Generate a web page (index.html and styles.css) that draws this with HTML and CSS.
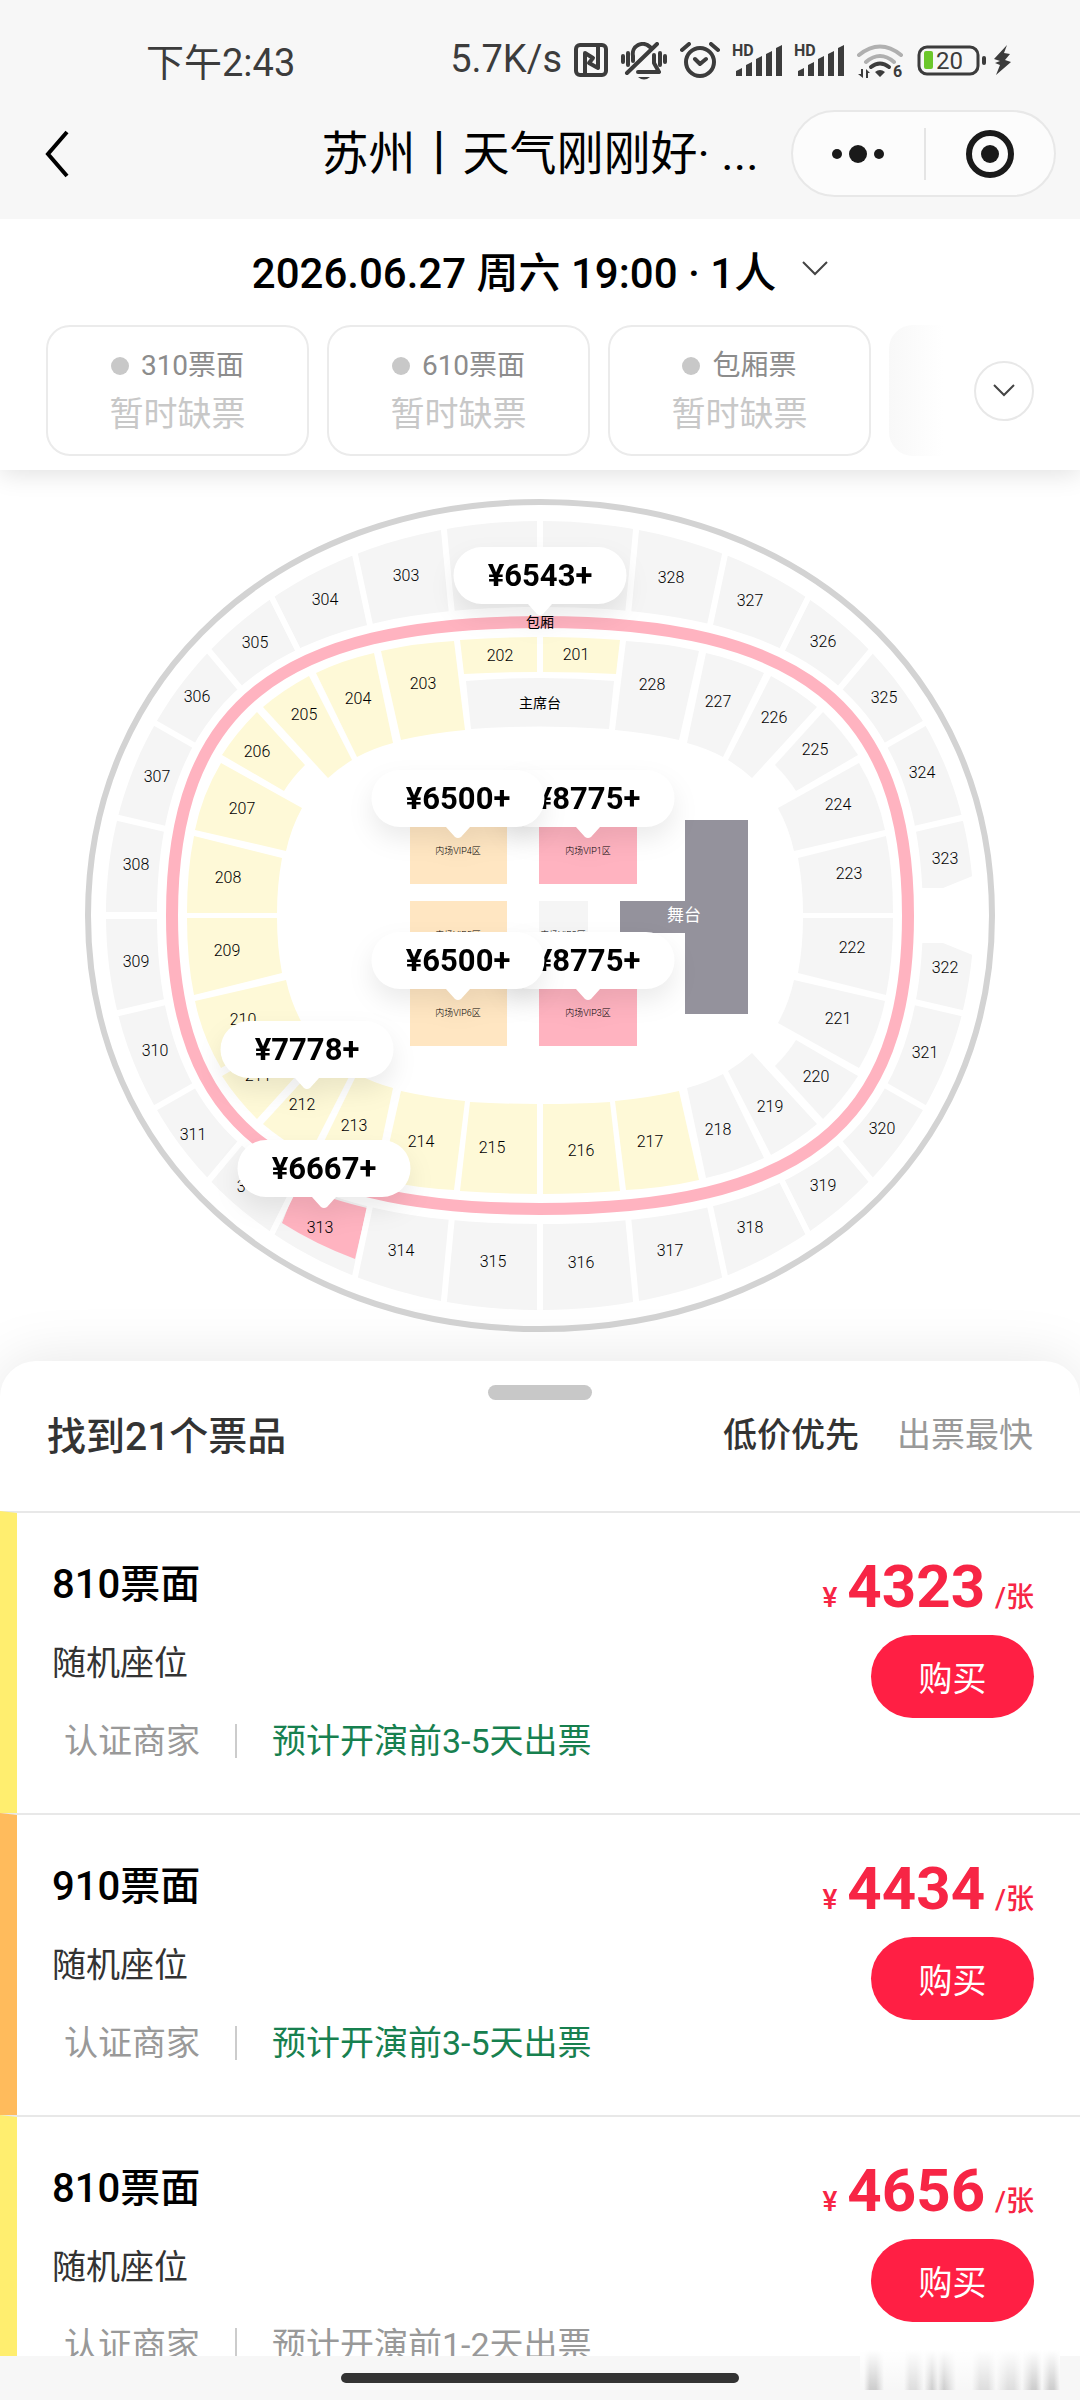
FILE: index.html
```html
<!DOCTYPE html>
<html lang="zh-CN">
<head>
  <meta charset="UTF-8" />
  <meta name="viewport" content="width=device-width, initial-scale=1" />
  <title>选择票品</title>
  <link rel="stylesheet" href="styles.css">
</head>
<body>

  <header class="header">
    <div class="status">
      <span class="status-time">下午2:43</span>
      <div class="status-icons">
        <span>5.7K/s</span>
        <svg class="icon" width="34" height="38" viewBox="0 0 34 38">
          <rect x="2" y="3" width="30" height="30" rx="4" />
          <path d="M11 32V11l8 5-4 5 9 5V5" />
        </svg>
        <svg class="icon" width="48" height="38" viewBox="0 0 48 38">
          <path d="M7 31L37 2M13 19v-5a10 10 0 0 1 17-9M34 13v8l5 9H18M3 14v6M8 11v12M40 11v12M45 14v6" />
          <path class="solid" d="M18 35h12q-6 5-12 0z" />
        </svg>
        <svg class="icon" width="40" height="38" viewBox="0 0 40 38">
          <circle cx="20" cy="20" r="14" />
          <path d="M2 8l7-6M31 2l7 6M15 17l5 5 6-5" />
        </svg>
        <svg class="icon" width="50" height="38" viewBox="0 0 50 38">
          <text class="hd" x="0" y="14">HD</text>
          <path class="solid" d="M4 34v-5l6-3v8zM14 34V23l6-3v14zM24 34V17l6-3v20zM34 34V12l6-3v25zM44 34V6l6-3v31z" />
        </svg>
        <svg class="icon" width="50" height="38" viewBox="0 0 50 38">
          <text class="hd" x="0" y="14">HD</text>
          <path class="solid" d="M4 34v-5l6-3v8zM14 34V23l6-3v14zM24 34V17l6-3v20zM34 34V12l6-3v25zM44 34V6l6-3v31z" />
        </svg>
        <svg class="icon" width="48" height="38" viewBox="0 0 48 38">
          <path class="faint" d="M3 13q21-17 42 0M10 20q14-12 28 0" />
          <path d="M15 25q9-7 18 0" />
          <path class="solid" d="M19 30q5-4 10 0l-5 5zM5 27h2v9l-5-4h3zM10 36v-9l4 4h-2v5z" />
          <text class="hd" x="37" y="35">6</text>
        </svg>
        <svg class="icon" width="98" height="38" viewBox="0 0 98 38">
          <rect class="thin" x="3" y="5" width="59" height="27" rx="8" />
          <rect class="charge" x="8" y="9" width="9" height="18" rx="2" />
          <text class="level" x="20" y="27">20</text>
          <rect class="solid" x="66" y="14" width="4" height="9" rx="2" />
          <path class="solid" d="M91 3L78 17l6 2-5 2 5 2-4 10 15-13-6-2 5-6-6-1z" />
        </svg>
      </div>
    </div>
    <nav class="nav">
      <button class="back" type="button" aria-label="返回">
        <svg width="26" height="48" viewBox="0 0 26 48"><path d="M23 2L4 24l19 22" /></svg>
      </button>
      <h1 class="title">苏州丨天气刚刚好· ...</h1>
      <div class="capsule">
        <button type="button" aria-label="更多">
          <svg width="54" height="24" viewBox="0 0 54 24"><circle cx="6" cy="12" r="5" /><circle cx="27" cy="12" r="9" /><circle cx="48" cy="12" r="5" /></svg>
        </button>
        <button type="button" aria-label="关闭">
          <svg width="50" height="50" viewBox="0 0 50 50"><circle class="target" cx="25" cy="25" r="21" /><circle cx="25" cy="25" r="9" /></svg>
        </button>
      </div>
    </nav>
  </header>

  <section class="filter">
    <button class="session" type="button">
      2026.06.27 周六 19:00 · 1人
      <svg width="26" height="16" viewBox="0 0 26 16"><path d="M1 1l12 12L25 1" /></svg>
    </button>
    <div class="chips">
      <button class="chip" type="button"><span class="chip-name">310票面</span><span class="chip-state">暂时缺票</span></button>
      <button class="chip" type="button"><span class="chip-name">610票面</span><span class="chip-state">暂时缺票</span></button>
      <button class="chip" type="button"><span class="chip-name">包厢票</span><span class="chip-state">暂时缺票</span></button>
      <span class="chip-next"></span>
      <button class="expand" type="button" aria-label="展开">
        <svg width="22" height="14" viewBox="0 0 22 14"><path d="M1 1l10 10L21 1" /></svg>
      </button>
    </div>
  </section>

  <section class="map">
    <svg class="arena" viewBox="0 470 1080 891">
      <defs>
        <g id="side">
          <path d="M187 913Q187 870 194 836L282 858Q277 885 277 913Z" />
          <path d="M195 830Q202 795 221 763L302 808Q291 828 286 851Z" />
          <path d="M222 755Q236 733 257 712L305 765Q292 778 284 791Z" />
          <path d="M263 707Q283 690 309 676L352 760Q339 768 328 778Z" />
          <path d="M316 673Q343 660 374 653L393 743Q374 748 357 757Z" />
        </g>
        <path id="end" d="M381 651Q416 643 454 641L465 730Q432 733 401 740Z" />
        <path id="short" d="M460 640Q500 637 537 637V672Q500 672 464 674Z" />
        <path id="long" d="M460 640Q500 637 537 637V727Q505 727 470 729Z" />
        <path id="aisles" d="M540 515V612M443 520L452 615M353 545L370 625M268 590L298 650M204 645L240 688M148 719L197 747M110 816L170 830M100 915H162" />
        <path id="pin" d="M-58 -68H58A28 28 0 0 1 58 -11H12L3 -1Q0 1 -3 -1L-12 -11H-58A28 28 0 0 1 -58 -68Z" />
      </defs>

      <!-- outer wall and upper tier -->
      <path class="wall" d="M88 915.5C88 676 278 502 540 502S992 676 992 915.5S802 1329 540 1329S88 1155 88 915.5Z" />
      <path class="seat" fill-rule="evenodd" d="M106 915.5C106 687 288 521 540 521S974 687 974 915.5S792 1310 540 1310S106 1144 106 915.5ZM157 915.5C157 700 272 607 540 607S923 700 923 915.5S808 1224 540 1224S157 1131 157 915.5Z" />
      <path class="hot" d="M293 1195L282 1223Q315 1244 355 1259L367 1208Q330 1199 310 1190Z" />
      <g class="aisle">
        <use href="#aisles" />
        <use href="#aisles" transform="translate(1080 0) scale(-1 1)" />
        <use href="#aisles" transform="translate(0 1831) scale(1 -1)" />
        <use href="#aisles" transform="translate(1080 1831) scale(-1 -1)" />
      </g>
      <path class="gap" d="M918 888H943L980 873V958L943 943H918Z" />
      <path class="box" d="M172 915.5C172 707 279 622 540 622S908 707 908 915.5S801 1209 540 1209S172 1124 172 915.5Z" />

      <!-- lower tier -->
      <g class="low">
        <use href="#side" /><use href="#end" /><use href="#short" />
      </g>
      <g transform="translate(1080 0) scale(-1 1)">
        <g class="seat"><use href="#side" /><use href="#end" /></g>
        <use class="low" href="#short" />
      </g>
      <g class="low" transform="translate(0 1831) scale(1 -1)">
        <use href="#side" /><use href="#end" /><use href="#long" />
      </g>
      <g transform="translate(1080 1831) scale(-1 -1)">
        <use class="seat" href="#side" />
        <g class="low"><use href="#end" /><use href="#long" /></g>
      </g>
      <path class="seat" d="M466 681Q540 675 614 681L609 729Q540 724 471 729Z" />

      <!-- floor -->
      <path class="mid" d="M410 806H507V884H410ZM410 901H507V965H410ZM410 968H507V1046H410Z" />
      <path class="hot" d="M539 806H637V884H539ZM539 968H637V1046H539Z" />
      <path class="seat" d="M539 901H588V965H539Z" />
      <path class="stage" d="M685 820H748V1014H685V933H620V901H685Z" />

      <g class="label">
        <text x="406" y="575">303</text><text x="325" y="599">304</text><text x="255" y="642">305</text>
        <text x="197" y="696">306</text><text x="157" y="776">307</text><text x="136" y="864">308</text>
        <text x="136" y="961">309</text><text x="155" y="1050">310</text><text x="193" y="1134">311</text>
        <text x="250" y="1186">312</text><text x="320" y="1227">313</text><text x="401" y="1250">314</text>
        <text x="493" y="1261">315</text><text x="581" y="1262">316</text><text x="670" y="1250">317</text>
        <text x="750" y="1227">318</text><text x="823" y="1185">319</text><text x="882" y="1128">320</text>
        <text x="925" y="1052">321</text><text x="945" y="967">322</text><text x="945" y="858">323</text>
        <text x="922" y="772">324</text><text x="884" y="697">325</text><text x="823" y="641">326</text>
        <text x="750" y="600">327</text><text x="671" y="577">328</text>
        <text x="576" y="654">201</text><text x="500" y="655">202</text><text x="423" y="683">203</text>
        <text x="358" y="698">204</text><text x="304" y="714">205</text><text x="257" y="751">206</text>
        <text x="242" y="808">207</text><text x="228" y="877">208</text><text x="227" y="950">209</text>
        <text x="243" y="1019">210</text><text x="258" y="1075">211</text><text x="302" y="1104">212</text>
        <text x="354" y="1125">213</text><text x="421" y="1141">214</text><text x="492" y="1147">215</text>
        <text x="581" y="1150">216</text><text x="650" y="1141">217</text><text x="718" y="1129">218</text>
        <text x="770" y="1106">219</text><text x="816" y="1076">220</text><text x="838" y="1018">221</text>
        <text x="852" y="947">222</text><text x="849" y="873">223</text><text x="838" y="804">224</text>
        <text x="815" y="749">225</text><text x="774" y="717">226</text><text x="718" y="701">227</text>
        <text x="652" y="684">228</text>
        <text class="zone" x="540" y="622">包厢</text><text class="zone" x="540" y="703">主席台</text>
      </g>
      <g class="label floor">
        <text x="458" y="851">内场VIP4区</text><text x="588" y="851">内场VIP1区</text>
        <text x="458" y="935">内场VIP5区</text><text x="563" y="935">内场VIP2区</text>
        <text x="458" y="1013">内场VIP6区</text><text x="588" y="1013">内场VIP3区</text>
      </g>
      <text class="label stage-name" x="684" y="915">舞台</text>

      <g class="pin" transform="translate(540 615)"><use href="#pin" /><text y="-40">¥6543+</text></g>
      <g class="pin" transform="translate(588 838)"><use href="#pin" /><text y="-40">¥8775+</text></g>
      <g class="pin" transform="translate(458 838)"><use href="#pin" /><text y="-40">¥6500+</text></g>
      <g class="pin" transform="translate(588 1000)"><use href="#pin" /><text y="-40">¥8775+</text></g>
      <g class="pin" transform="translate(458 1000)"><use href="#pin" /><text y="-40">¥6500+</text></g>
      <g class="pin" transform="translate(307 1089)"><use href="#pin" /><text y="-40">¥7778+</text></g>
      <g class="pin" transform="translate(324 1208)"><use href="#pin" /><text y="-40">¥6667+</text></g>
    </svg>
  </section>

  <main class="sheet">
    <div class="handle"></div>
    <div class="sheet-head">
      <h2>找到21个票品</h2>
      <div class="sort">
        <button class="active" type="button">低价优先</button>
        <button type="button">出票最快</button>
      </div>
    </div>
    <ul class="tickets">
      <li class="ticket yellow">
        <div class="info">
          <h3>810票面</h3>
          <p class="seat-type">随机座位</p>
          <p class="meta"><span>认证商家</span><span class="fast">预计开演前3-5天出票</span></p>
        </div>
        <div class="buy">
          <p class="price"><small>¥</small>4323<small>/张</small></p>
          <button type="button">购买</button>
        </div>
      </li>
      <li class="ticket orange">
        <div class="info">
          <h3>910票面</h3>
          <p class="seat-type">随机座位</p>
          <p class="meta"><span>认证商家</span><span class="fast">预计开演前3-5天出票</span></p>
        </div>
        <div class="buy">
          <p class="price"><small>¥</small>4434<small>/张</small></p>
          <button type="button">购买</button>
        </div>
      </li>
      <li class="ticket yellow">
        <div class="info">
          <h3>810票面</h3>
          <p class="seat-type">随机座位</p>
          <p class="meta"><span>认证商家</span><span>预计开演前1-2天出票</span></p>
        </div>
        <div class="buy">
          <p class="price"><small>¥</small>4656<small>/张</small></p>
          <button type="button">购买</button>
        </div>
      </li>
    </ul>
  </main>

  <footer class="home">
    <div class="home-bar"></div>
    <div class="smudge"></div>
  </footer>

</body>
</html>
```
FILE: styles.css
```css
* {
  box-sizing: border-box;
}

body {
  margin: 0;
  height: 100vh;
  display: flex;
  flex-direction: column;
  overflow: hidden;
  background: #fff;
  color: #000;
  font-family: Roboto, "Noto Sans CJK SC", sans-serif;
}

h1, h2, h3, p, ul {
  margin: 0;
  padding: 0;
  font-weight: 400;
}

button {
  border: 0;
  padding: 0;
  background: none;
  color: inherit;
  font: inherit;
}

svg {
  display: block;
}

/* status bar and title */
.header {
  flex: none;
  position: relative;
  z-index: 2;
  background: #f7f7f7;
}

.status {
  height: 110px;
  padding: 8px 66px 0 146px;
  display: flex;
  align-items: center;
  justify-content: space-between;
  font-size: 38px;
  color: #3c3c3c;
}

.status-icons {
  display: flex;
  align-items: center;
  gap: 12px;
}

.icon {
  margin-top: 4px;
  fill: none;
  stroke: #3c3c3c;
  stroke-width: 4;
  stroke-linecap: round;
  stroke-linejoin: round;
}

.icon .solid {
  fill: #3c3c3c;
  stroke: none;
}

.icon .faint {
  stroke: #b0b0b0;
}

.icon .thin {
  stroke-width: 3;
}

.icon .charge {
  fill: #6cc72b;
  stroke: none;
}

.icon text {
  fill: #3c3c3c;
  stroke: none;
}

.hd {
  font-size: 16px;
  font-weight: 700;
}

.level {
  font-size: 24px;
}

.nav {
  display: grid;
  grid-template-columns: 265px 1fr 265px;
  align-items: center;
  padding: 0 24px 22px;
}

.back {
  justify-self: start;
  padding-left: 20px;
}

.back svg {
  fill: none;
  stroke: #000;
  stroke-width: 4;
}

.title {
  font-size: 47px;
  line-height: 60px;
  text-align: center;
  white-space: nowrap;
}

.capsule {
  display: grid;
  grid-template-columns: 1fr 1fr;
  align-items: center;
  height: 87px;
  border: 2px solid #e8e8e8;
  border-radius: 44px;
  background: #fcfcfc;
}

.capsule button {
  display: flex;
  align-items: center;
  justify-content: center;
  height: 52px;
}

.capsule button + button {
  border-left: 2px solid #e5e5e5;
}

.capsule svg {
  fill: #1a1a1a;
}

.capsule .target {
  fill: none;
  stroke: #1a1a1a;
  stroke-width: 6;
}

/* session and price filter */
.filter {
  flex: none;
  position: relative;
  z-index: 1;
  padding: 20px 46px 14px;
  background: #fff;
  box-shadow: 0 4px 24px rgba(0, 0, 0, 0.12);
}

.session {
  display: flex;
  align-items: center;
  gap: 26px;
  margin: 0 auto;
  height: 60px;
  font-size: 42px;
  font-weight: 500;
}

.session svg,
.expand svg {
  fill: none;
  stroke: #444;
  stroke-width: 2;
}

.chips {
  display: flex;
  align-items: center;
  gap: 18px;
  margin-top: 26px;
}

.chip {
  width: 263px;
  height: 131px;
  display: flex;
  flex-direction: column;
  align-items: center;
  justify-content: center;
  border: 2px solid #ebebeb;
  border-radius: 24px;
}

.chip-name {
  display: flex;
  align-items: center;
  gap: 12px;
  font-size: 28px;
  line-height: 46px;
  color: #8c8c8c;
}

.chip-name::before {
  content: "";
  width: 18px;
  height: 18px;
  border-radius: 50%;
  background: #c8c8c8;
}

.chip-state {
  font-size: 34px;
  line-height: 50px;
  color: #c8c8c8;
}

.chip-next {
  width: 54px;
  height: 131px;
  border-radius: 24px 0 0 24px;
  background: linear-gradient(to right, #f8f8f8, #fff);
}

.expand {
  display: flex;
  align-items: center;
  justify-content: center;
  width: 60px;
  height: 60px;
  margin-left: auto;
  border: 2px solid #e8e8e8;
  border-radius: 50%;
}

/* seat map */
.map {
  flex: none;
}

.arena {
  width: 100%;
}

.wall {
  fill: none;
  stroke: #d3d3d3;
  stroke-width: 6;
}

.box {
  fill: none;
  stroke: #ffb3c0;
  stroke-width: 12;
}

.aisle {
  fill: none;
  stroke: #fff;
  stroke-width: 6;
}

.gap {
  fill: #fff;
}

.seat {
  fill: #f5f5f5;
}

.low {
  fill: #fef9d7;
}

.mid {
  fill: #ffe6c2;
}

.hot {
  fill: #ffb3c0;
}

.stage {
  fill: #94929c;
}

.label {
  font-size: 16px;
  font-weight: 300;
  text-anchor: middle;
  dominant-baseline: central;
}

.zone {
  font-size: 14px;
  font-weight: 400;
}

.floor {
  font-size: 9px;
}

.stage-name {
  font-size: 17px;
  font-weight: 400;
  fill: #fff;
}

.pin {
  fill: #fff;
  filter: drop-shadow(0 12px 12px rgba(0, 0, 0, 0.08));
}

.pin text {
  fill: #000;
  font-size: 31px;
  font-weight: 700;
  text-anchor: middle;
  dominant-baseline: central;
}

/* ticket list */
.sheet {
  flex: 1;
  min-height: 0;
  position: relative;
  overflow: hidden;
  border-radius: 36px 36px 0 0;
  background: #fff;
  box-shadow: 0 0 60px rgba(0, 0, 0, 0.1);
}

.handle {
  width: 104px;
  height: 15px;
  margin: 24px auto 0;
  border-radius: 8px;
  background: #c8c8c8;
}

.sheet-head {
  display: flex;
  align-items: center;
  justify-content: space-between;
  height: 111px;
  padding: 0 47px 46px;
  color: #333;
}

.sheet-head h2 {
  font-size: 39px;
  font-weight: 500;
}

.sort {
  display: flex;
  gap: 38px;
  font-size: 34px;
  color: #999;
}

.sort .active {
  font-weight: 500;
  color: #333;
}

.tickets {
  list-style: none;
}

.ticket {
  display: flex;
  justify-content: space-between;
  height: 302px;
  padding: 44px 46px 0 35px;
  border-top: 2px solid #e8e8e8;
  border-left: 17px solid;
}

.yellow {
  border-left-color: #ffee6f;
}

.orange {
  border-left-color: #ffbb5c;
}

.ticket h3 {
  font-size: 40px;
  font-weight: 500;
  line-height: 56px;
}

.seat-type {
  margin-top: 26px;
  font-size: 34px;
  line-height: 48px;
  color: #333;
}

.meta {
  display: flex;
  margin: 30px 0 0 12px;
  font-size: 34px;
  line-height: 48px;
  color: #999;
}

.meta span + span {
  position: relative;
  padding-left: 72px;
}

.meta span + span::before {
  content: "";
  position: absolute;
  left: 35px;
  top: 7px;
  width: 2px;
  height: 34px;
  background: #ccc;
}

.meta .fast {
  color: #17804f;
}

.buy {
  display: flex;
  flex-direction: column;
  align-items: flex-end;
}

.price {
  display: flex;
  align-items: baseline;
  gap: 10px;
  height: 66px;
  font-size: 60px;
  font-weight: 700;
  line-height: 60px;
  color: #f72545;
}

.price small {
  font-size: 28px;
  font-weight: 500;
}

.buy button {
  width: 163px;
  height: 83px;
  margin-top: 12px;
  border-radius: 42px;
  background: #ff1f44;
  color: #fff;
  font-size: 34px;
}

/* system gesture bar */
.home {
  flex: none;
  position: relative;
  height: 44px;
  padding-top: 17px;
  background: #f7f7f7;
}

.home-bar {
  width: 398px;
  height: 10px;
  margin: 0 auto;
  border-radius: 5px;
  background: #333;
}

.smudge {
  position: absolute;
  right: 20px;
  bottom: 10px;
  width: 200px;
  height: 40px;
  background:
    linear-gradient(#fff, rgba(255, 255, 255, 0)),
    linear-gradient(to right, #f7f7f7 2%, #ccc 5% 8%, #f7f7f7 12% 22%, #ddd 25% 28%, #f7f7f7 32%, #ccc 36%, #eee 39%, #ccc 42%, #f7f7f7 48% 56%, #ddd 60% 64%, #f7f7f7 68%, #ddd 74% 77%, #f7f7f7 81%, #ccc 86% 88%, #f7f7f7 91%, #ccc 95% 97%, #f7f7f7);
}
```
